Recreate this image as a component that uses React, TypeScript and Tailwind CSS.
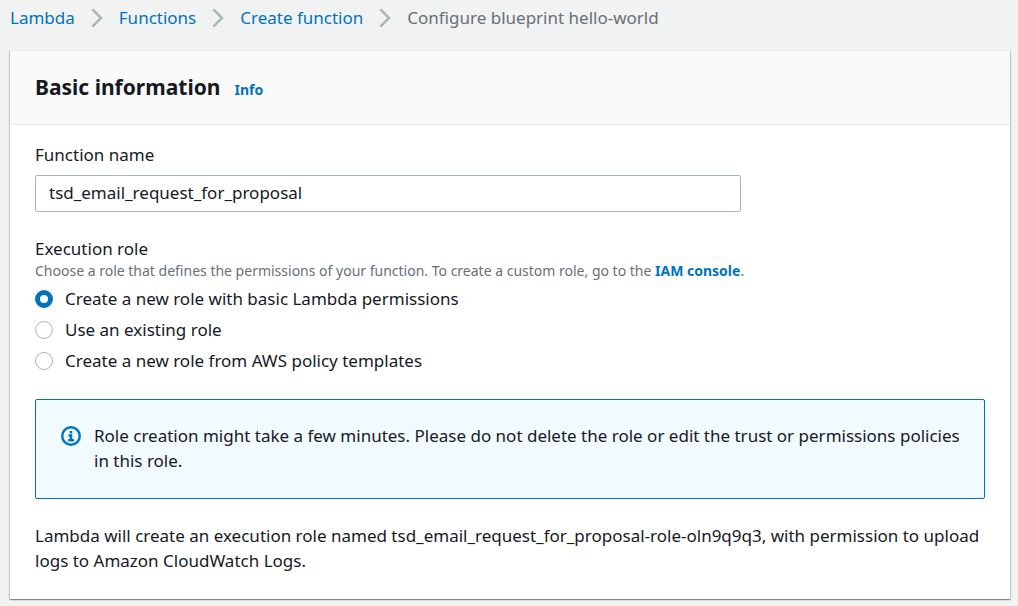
import { Fragment, useState } from "react";

const trail = ["Lambda", "Functions", "Create function"];

const roleOptions = [
  { value: "new", label: "Create a new role with basic Lambda permissions" },
  { value: "existing", label: "Use an existing role" },
  { value: "template", label: "Create a new role from AWS policy templates" },
];

function Chevron() {
  return (
    <svg
      className="h-5 w-3 shrink-0"
      viewBox="0 0 12 20"
      fill="none"
      stroke="#aab7b8"
      strokeWidth="2.6"
      aria-hidden="true"
    >
      <path d="M1.4 1.4 10 10l-8.6 8.6" />
    </svg>
  );
}

function InfoIcon() {
  return (
    <svg
      className="mt-[3px] h-5 w-5 shrink-0"
      viewBox="0 0 20 20"
      fill="none"
      stroke="#0073bb"
      aria-hidden="true"
    >
      <circle cx="10" cy="10" r="8.8" strokeWidth="2.4" />
      <path d="M10 5v2.5M7.5 9.4H10v4.8M7.2 14.2h5.8" strokeWidth="2.5" />
    </svg>
  );
}

function Breadcrumbs() {
  return (
    <nav aria-label="Breadcrumbs" className="flex h-[35px] items-center">
      {trail.map((name) => (
        <Fragment key={name}>
          <a href="#" className="text-[#0073bb]">
            {name}
          </a>
          <span className="flex px-4">
            <Chevron />
          </span>
        </Fragment>
      ))}
      <span className="text-[#687078]">Configure blueprint hello-world</span>
    </nav>
  );
}

export default function App() {
  const [name, setName] = useState("tsd_email_request_for_proposal");
  const [role, setRole] = useState("new");

  return (
    <div className="min-h-screen bg-[#f1f3f3] pr-2 pb-1.5 pl-2.5 font-['Noto_Sans',sans-serif] text-[17px] leading-[25px] text-[#16191f]">
      <Breadcrumbs />

      <main className="mt-[15px] border-t border-[#eaeded] bg-white shadow-[0_1px_1px_0_rgba(0,28,36,0.3),1px_1px_1px_0_rgba(0,28,36,0.15),-1px_1px_1px_0_rgba(0,28,36,0.15)]">
        <header className="flex items-baseline gap-[14px] border-b border-[#eaeded] bg-[#fafafa] px-[25px] pt-5 pb-[21px]">
          <h1 className="text-[21px] leading-8 font-bold">Basic information</h1>
          <a href="#" className="text-sm font-bold text-[#0073bb]">
            Info
          </a>
        </header>

        <div className="px-[25px] pt-[17px] pb-[26px]">
          <label htmlFor="function-name" className="block">
            Function name
          </label>
          <input
            id="function-name"
            type="text"
            value={name}
            onChange={(e) => setName(e.target.value)}
            className="mt-2 block h-[37px] w-[706px] max-w-full rounded-xs border border-[#aab7b8] bg-white px-[13px] pb-0.5 outline-none focus:border-[#00a1c9]"
          />

          <fieldset className="mt-6">
            <legend>Execution role</legend>
            <p className="text-sm leading-5 text-[#687078]">
              Choose a role that defines the permissions of your function. To create a custom role, go to the{" "}
              <a href="#" className="font-bold text-[#0073bb]">
                IAM console
              </a>
              .
            </p>
            <div className="mt-[5px] flex flex-col items-start gap-1.5">
              {roleOptions.map((option) => (
                <label key={option.value} className="flex items-center gap-3">
                  <input
                    type="radio"
                    name="execution-role"
                    value={option.value}
                    checked={role === option.value}
                    onChange={() => setRole(option.value)}
                    className="h-[18px] w-[18px] shrink-0 appearance-none rounded-full border border-[#aab7b8] bg-white checked:border-[5px] checked:border-[#0073bb]"
                  />
                  {option.label}
                </label>
              ))}
            </div>
          </fieldset>

          <div
            role="status"
            className="mt-[26px] flex gap-[13px] rounded-xs border border-[#0073bb] bg-[#f1faff] pt-[23px] pr-5 pb-[25px] pl-[25px]"
          >
            <InfoIcon />
            <p>
              Role creation might take a few minutes. Please do not delete the role or edit the trust or permissions
              policies in this role.
            </p>
          </div>

          <p className="mt-6">
            {`Lambda will create an execution role named ${name}-role-oln9q9q3, with permission to upload logs to Amazon CloudWatch Logs.`}
          </p>
        </div>
      </main>
    </div>
  );
}
